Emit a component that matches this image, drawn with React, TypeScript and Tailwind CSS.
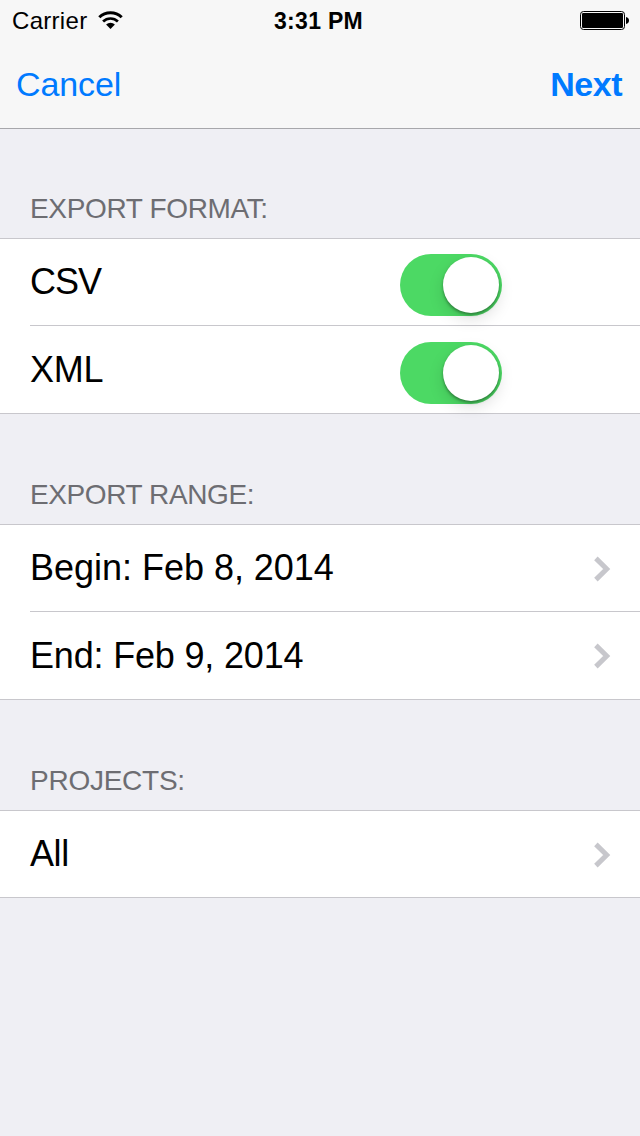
import type { ReactNode } from "react";

function WifiIcon() {
  return (
    <svg className="mb-[2px] h-[18px] w-[26px]" viewBox="0 0 26 18" fill="none">
      <path d="M1.3 6.3 A16 16 0 0 1 23.7 6.3" stroke="#000" strokeWidth="3" />
      <path d="M5.1 10.5 A10.6 10.6 0 0 1 19.9 10.5" stroke="#000" strokeWidth="2.7" />
      <path d="M12.5 18 L8.1 13.6 A6.4 6.4 0 0 1 16.9 13.6 Z" fill="#000" />
    </svg>
  );
}

function BatteryIcon() {
  return (
    <svg className="h-[19px] w-[50px]" viewBox="0 0 50 19" fill="none">
      <rect x="0.5" y="0.5" width="44" height="18" rx="3" stroke="#000" />
      <rect x="2" y="2" width="41" height="15" rx="1.2" fill="#000" />
      <path d="M46 6 C48 6.3 49 7.6 49 9.5 C49 11.4 48 12.7 46 13 Z" fill="#000" />
    </svg>
  );
}

function Chevron() {
  return (
    <svg className="mr-[29px] mt-[1px] h-[26px] w-[17px]" viewBox="0 0 17 26" fill="none">
      <path d="M1.9 2.4 L12.7 13 L1.9 23.6" stroke="#c7c7cc" strokeWidth="5" />
    </svg>
  );
}

function Toggle({ className }: { className: string }) {
  return (
    <div className={`mr-[138px] flex h-[62px] w-[102px] items-center justify-end self-start rounded-full bg-[#4cd964] pr-[3px] ${className}`}>
      <div className="h-[56px] w-[56px] rounded-full bg-white shadow-[0_6px_16px_rgba(0,0,0,0.13),0_2px_3px_rgba(0,0,0,0.35)]" />
    </div>
  );
}

function Row({ label, className, tracking, children }: { label: string; className: string; tracking: string; children: ReactNode }) {
  return (
    <div className={`ml-[30px] flex items-center justify-between border-[#c8c7cc] ${className}`}>
      <span className={`text-[36px] leading-[40px] ${tracking}`}>{label}</span>
      {children}
    </div>
  );
}

function Section({ title, className, children }: { title: string; className: string; children: ReactNode }) {
  return (
    <section>
      <h2 className={`flex items-end pb-[13px] pl-[30px] text-[28px] leading-[32px] text-[#6d6d72] ${className}`}>{title}</h2>
      <div className="border-y border-[#c8c7cc] bg-white">{children}</div>
    </section>
  );
}

export default function App() {
  return (
    <div className="flex h-[1136px] w-[640px] flex-col overflow-hidden bg-[#efeff4] font-['Liberation_Sans',Arial,sans-serif] text-black">
      <header className="h-[129px] border-b border-[#a7a7ab] bg-[#f7f7f7]">
        <div className="flex h-[41px] items-center justify-between pl-[12px] pr-[10px] text-[24px] leading-[28px]">
          <div className="flex w-[262px] items-center gap-[11px]">
            <span className="tracking-[0.3px]">Carrier</span>
            <WifiIcon />
          </div>
          <span className="flex-1 text-[23px] font-bold tracking-[0.3px]">3:31 PM</span>
          <BatteryIcon />
        </div>
        <div className="flex h-[85px] items-center justify-between pl-[16px] pr-[18px] text-[34px] leading-[40px] text-[#007aff]">
          <button className="tracking-[-0.1px]">Cancel</button>
          <button className="font-bold tracking-[-0.5px]">Next</button>
        </div>
      </header>
      <main>
        <Section title="EXPORT FORMAT:" className="h-[109px] tracking-[-0.35px]">
          <Row label="CSV" className="h-[87px] border-b" tracking="tracking-[-1px]">
            <Toggle className="mt-[15px]" />
          </Row>
          <Row label="XML" className="h-[87px]" tracking="tracking-[-0.2px]">
            <Toggle className="mt-[16px]" />
          </Row>
        </Section>
        <Section title="EXPORT RANGE:" className="h-[110px] tracking-[-0.4px]">
          <Row label="Begin: Feb 8, 2014" className="h-[87px] border-b" tracking="tracking-[-0.02px]">
            <Chevron />
          </Row>
          <Row label="End: Feb 9, 2014" className="h-[87px]" tracking="tracking-[-0.18px]">
            <Chevron />
          </Row>
        </Section>
        <Section title="PROJECTS:" className="h-[110px] tracking-[-0.25px]">
          <Row label="All" className="h-[86px]" tracking="tracking-[-0.4px]">
            <Chevron />
          </Row>
        </Section>
      </main>
    </div>
  );
}
